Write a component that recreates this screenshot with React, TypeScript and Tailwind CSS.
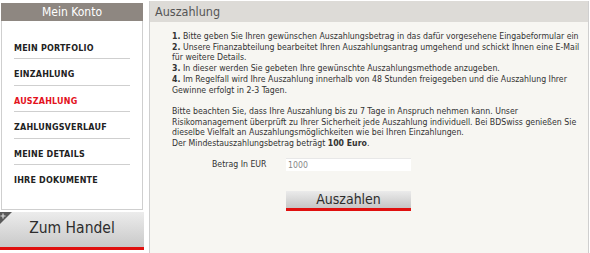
import React from 'react'

const menu = [
  { label: 'MEIN PORTFOLIO' },
  { label: 'EINZAHLUNG' },
  { label: 'AUSZAHLUNG', active: true },
  { label: 'ZAHLUNGSVERLAUF' },
  { label: 'MEINE DETAILS' },
  { label: 'IHRE DOKUMENTE', last: true },
]

const font = { fontFamily: '"DejaVu Sans Condensed", "DejaVu Sans", Verdana, sans-serif' }

export default function App() {
  return (
    <div className="w-[590px] h-[253px] bg-white flex overflow-hidden font-stretch-condensed" style={font}>
      {/* Sidebar */}
      <div className="w-[144px] flex flex-col pt-[3px]">
        <div className="h-[18px] mx-[1px] bg-[#8e8781] text-white text-[12px] leading-[18px] text-center">
          Mein Konto
        </div>
        <div className="h-[189px] mx-[1px] bg-white border-x border-b border-[#cfcfcf] px-[12px] pt-[11.5px]">
          {menu.map((m) => (
            <div
              key={m.label}
              className={`h-[26.5px] pt-[11px] leading-[10px] text-[8px] font-bold tracking-[0.2px] ${
                m.last ? '' : 'border-b border-[#cfcfcf]'
              } ${m.active ? 'text-[#e3121c]' : 'text-[#222]'}`}
              style={{ fontFamily: '"DejaVu Sans", Verdana, sans-serif', fontStretch: 'normal' }}
            >
              {m.label}
            </div>
          ))}
        </div>
        <div className="relative mt-[2px] h-[38px] bg-gradient-to-b from-[#ececec] to-[#c9c9c9] border-b-[3px] border-[#e0100f] flex items-center justify-center">
          <svg className="absolute left-0 top-0" width="12" height="12" viewBox="0 0 12 12">
            <path d="M0 0 H12 L0 12 Z" fill="#5a5a5a" />
            <path d="M3 1.5 V6.5 M0.5 4 H5.5" stroke="#ddd" strokeWidth="1.2" />
          </svg>
          <span className="text-[15.5px] text-[#2d2d2d] pb-[2px]">Zum Handel</span>
        </div>
      </div>

      {/* Content */}
      <div className="ml-[5px] mr-[1px] mt-[1px] flex-1 flex flex-col border-x border-[#cfcfcf] bg-[#f7f6f2]">
        <div className="h-[21px] bg-[#dddbd7] pl-[5px] text-[12.5px] leading-[21px] text-[#555]">Auszahlung</div>
        <div className="pl-[22px] pt-[9px] text-[8.7px] leading-[10.7px] text-[#333] whitespace-nowrap">
          <p>
            <b>1.</b> Bitte geben Sie Ihren gewünschen Auszahlungsbetrag in das dafür vorgesehene Eingabeformular ein
            <br />
            <b>2.</b> Unsere Finanzabteilung bearbeitet Ihren Auszahlungsantrag umgehend und schickt Ihnen eine E-Mail
            <br />
            für weitere Details.
            <br />
            <b>3.</b> In dieser werden Sie gebeten Ihre gewünschte Auszahlungsmethode anzugeben.
            <br />
            <b>4.</b> Im Regelfall wird Ihre Auszahlung innerhalb von 48 Stunden freigegeben und die Auszahlung Ihrer
            <br />
            Gewinne erfolgt in 2-3 Tagen.
          </p>
          <p className="mt-[10.7px]">
            Bitte beachten Sie, dass Ihre Auszahlung bis zu 7 Tage in Anspruch nehmen kann. Unser
            <br />
            Risikomanagement überprüft zu Ihrer Sicherheit jede Auszahlung individuell. Bei BDSwiss genießen Sie
            <br />
            dieselbe Vielfalt an Auszahlungsmöglichkeiten wie bei Ihren Einzahlungen.
            <br />
            Der Mindestauszahlungsbetrag beträgt <b>100 Euro</b>.
          </p>
        </div>
        <div className="mt-[9px] flex items-center">
          <label className="w-[136px] pl-[62px] text-[8.7px] text-[#333]">Betrag In EUR</label>
          <div className="w-[125px] h-[13px] bg-white border-t border-[#e8e8e8] pl-[2px] text-[8.7px] leading-[12px] text-[#888]">
            1000
          </div>
        </div>
        <div className="mt-[20px] ml-[136px] w-[125px] h-[20px] bg-gradient-to-b from-[#ebebeb] to-[#c6c6c6] border-b-[3px] border-[#e0100f] flex items-center justify-center">
          <span className="text-[14px] leading-[16px] text-[#2d2d2d]">Auszahlen</span>
        </div>
      </div>
    </div>
  )
}
